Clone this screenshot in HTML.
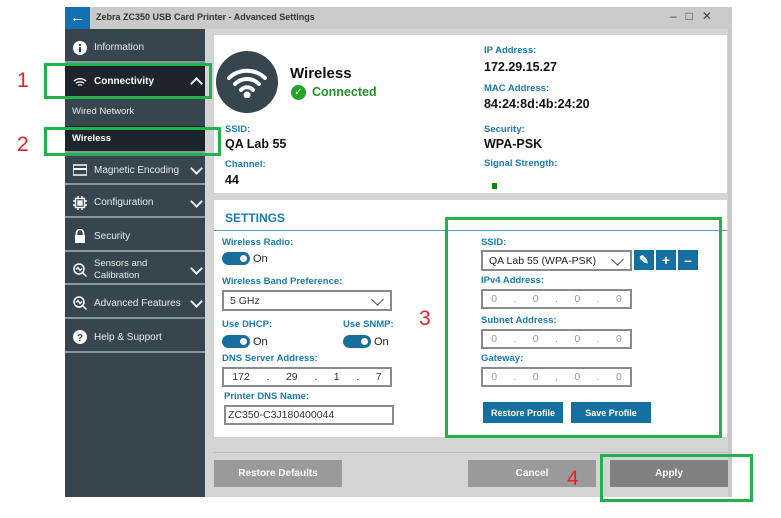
<!DOCTYPE html>
<html><head><style>
*{margin:0;padding:0;box-sizing:border-box}
body{width:781px;height:518px;background:#fff;position:relative;overflow:hidden;font-family:"Liberation Sans",sans-serif}
.a{position:absolute}
.lbl{color:#1a7bb0;font-weight:bold;font-size:9.5px}
.val{color:#111;font-weight:bold;font-size:12.5px}
.nav{position:absolute;left:65px;width:140px;color:#e8ecee;font-size:10px;border-bottom:2px solid #8a979e;display:flex;align-items:center;padding-left:29px;padding-top:4px}
.nav .ic{position:absolute;left:8px;width:14px;height:14px;margin-top:0}
.chev{position:absolute;right:4px;top:50%;margin-top:-4px;width:9px;height:9px;border-right:2px solid #e8ecee;border-bottom:2px solid #e8ecee;transform:rotate(45deg)}
.tog{display:inline-block;width:28px;height:13px;border-radius:7px;background:#1a6e9c;position:relative;vertical-align:middle}
.tog:after{content:"";position:absolute;right:3px;top:3px;width:7px;height:7px;border-radius:50%;background:#fff}
.on{font-size:11px;color:#222;vertical-align:middle;margin-left:3px}
.inp{position:absolute;border:2px solid #8a8a8a;background:#fff;font-size:10.5px;color:#333;display:flex;align-items:center}
.ip{justify-content:space-around;color:#999}
.bb{position:absolute;background:#1470a0;color:#fff;font-weight:bold;font-size:9px;display:flex;align-items:center;justify-content:center}
.gb{position:absolute;border:3px solid #22b14c}
.rn{position:absolute;color:#e8202a;font-size:21px}
</style></head><body>
<div class="a" style="left:65px;top:7px;width:667px;height:22px;background:#cacaca"></div>
<div class="a" style="left:65px;top:7px;width:25px;height:22px;background:#1470b0;color:#fff;font-size:15px;text-align:center;line-height:21px">&#8592;</div>
<div class="a" style="left:96px;top:12px;font-size:9px;font-weight:bold;color:#333">Zebra ZC350 USB Card Printer - Advanced Settings</div>
<div class="a" style="left:670px;top:9px;font-size:12px;color:#444;letter-spacing:9px">&#8211;&#9633;&#10005;</div>
<div class="a" style="left:65px;top:29px;width:140px;height:468px;background:#36454e"></div>
<div class="a" style="left:205px;top:29px;width:8px;height:468px;background:#d4d4d4"></div>
<div class="a" style="left:213px;top:29px;width:515px;height:468px;background:#d4d4d4"></div>
<div class="a" style="left:728px;top:29px;width:4px;height:468px;background:#c8c8c8"></div>
<div class="nav" style="top:30px;height:33px"><svg class="ic" viewBox="0 0 14 14"><circle cx="7" cy="7" r="7" fill="#fff"/><rect x="6" y="6" width="2" height="5" fill="#36454e"/><circle cx="7" cy="4" r="1.1" fill="#36454e"/></svg>Information</div>
<div class="nav" style="top:63px;height:35px;background:#1c252b;font-weight:bold;color:#fff"><svg class="ic" viewBox="0 0 14 14" fill="none" stroke="#fff" stroke-width="1.3"><path d="M1 6a9 9 0 0 1 12 0M3 8.3a6 6 0 0 1 8 0M5 10.5a3 3 0 0 1 4 0"/></svg>Connectivity<div class="chev" style="transform:rotate(225deg);margin-top:-1px"></div></div>
<div class="a" style="left:72px;top:106px;font-size:9.5px;color:#e8ecee">Wired Network</div>
<div class="a" style="left:65px;top:126px;width:140px;height:27px;background:#1c252b;border-bottom:2px solid #8a979e"></div>
<div class="a" style="left:72px;top:133px;font-size:9.5px;color:#fff;font-weight:bold">Wireless</div>
<div class="nav" style="top:153px;height:32px"><svg class="ic" viewBox="0 0 14 14"><rect x="0" y="2" width="14" height="10" fill="none" stroke="#fff" stroke-width="1.5"/><rect x="0" y="5" width="14" height="2" fill="#fff"/></svg>Magnetic Encoding<div class="chev"></div></div>
<div class="nav" style="top:185px;height:33px"><svg class="ic" viewBox="0 0 14 14" fill="none" stroke="#fff" stroke-width="1.4"><rect x="2.5" y="2.5" width="9" height="9"/><rect x="5" y="5" width="4" height="4" fill="#fff"/><path d="M5 0v2M9 0v2M5 12v2M9 12v2M0 5h2M0 9h2M12 5h2M12 9h2"/></svg>Configuration<div class="chev"></div></div>
<div class="nav" style="top:218px;height:34px"><svg class="ic" viewBox="0 0 14 14"><path d="M3.5 6V4a3.5 3.5 0 0 1 7 0v2" fill="none" stroke="#fff" stroke-width="1.6"/><rect x="2" y="6" width="10" height="8" fill="#fff"/></svg>Security</div>
<div class="nav" style="top:252px;height:33px;line-height:12px;font-size:9.5px">Sensors and<br>Calibration<svg class="ic" viewBox="0 0 14 14" fill="none" stroke="#fff" stroke-width="1.5"><circle cx="6" cy="6" r="5"/><path d="M9.5 9.5l4 4M3 6.5l2-2 2 3 2-2"/></svg><div class="chev"></div></div>
<div class="nav" style="top:285px;height:34px"><svg class="ic" viewBox="0 0 14 14" fill="none" stroke="#fff" stroke-width="1.5"><circle cx="6" cy="6" r="5"/><path d="M9.5 9.5l4 4M3 6.5l2-2 2 3 2-2"/></svg>Advanced Features<div class="chev"></div></div>
<div class="nav" style="top:319px;height:34px"><svg class="ic" viewBox="0 0 14 14"><circle cx="7" cy="7" r="7" fill="#fff"/><text x="7" y="11" font-size="10" font-weight="bold" text-anchor="middle" fill="#36454e" font-family="Liberation Sans">?</text></svg>Help &amp; Support</div>
<div class="a" style="left:214px;top:35px;width:513px;height:158px;background:#fff"></div>
<div class="a" style="left:216px;top:51px;width:62px;height:62px;border-radius:50%;background:#37454e"></div>
<svg class="a" style="left:226px;top:66px" width="42" height="32" viewBox="0 0 42 32" fill="none" stroke="#fff" stroke-width="4" stroke-linecap="round"><path d="M3 12a26 26 0 0 1 36 0M9 18a17 17 0 0 1 24 0M15 24a8 8 0 0 1 12 0"/><circle cx="21" cy="29" r="1.5" fill="#fff"/></svg>
<div class="a" style="left:290px;top:65px;font-size:15px;font-weight:bold;color:#111">Wireless</div>
<div class="a" style="left:291px;top:85px;width:15px;height:15px;border-radius:50%;background:#22a32a;color:#fff;font-size:10px;text-align:center;line-height:15px">&#10003;</div>
<div class="a" style="left:312px;top:85px;font-size:12.5px;font-weight:bold;color:#22902a">Connected</div>
<div class="a lbl" style="left:225px;top:124px">SSID:</div>
<div class="a val" style="left:225px;top:137px">QA Lab 55</div>
<div class="a lbl" style="left:225px;top:159px">Channel:</div>
<div class="a val" style="left:225px;top:173px">44</div>
<div class="a lbl" style="left:484px;top:45px">IP Address:</div>
<div class="a val" style="left:484px;top:60px">172.29.15.27</div>
<div class="a lbl" style="left:484px;top:83px">MAC Address:</div>
<div class="a val" style="left:484px;top:97px">84:24:8d:4b:24:20</div>
<div class="a lbl" style="left:484px;top:124px">Security:</div>
<div class="a val" style="left:484px;top:137px">WPA-PSK</div>
<div class="a lbl" style="left:484px;top:158px">Signal Strength:</div>
<div class="a" style="left:492px;top:183px;width:5px;height:6px;background:#0a8a0a"></div>
<div class="a" style="left:214px;top:200px;width:513px;height:237px;background:#fff"></div>
<div class="a" style="left:225px;top:211px;font-size:12px;font-weight:bold;color:#1a7bb0">SETTINGS</div>
<div class="a" style="left:214px;top:230px;width:513px;height:1px;background:#5d9cc4"></div>
<div class="a lbl" style="left:222px;top:237px">Wireless Radio:</div>
<div class="a" style="left:222px;top:250px"><span class="tog"></span><span class="on">On</span></div>
<div class="a lbl" style="left:222px;top:276px">Wireless Band Preference:</div>
<div class="inp" style="left:222px;top:290px;width:170px;height:21px;padding-left:6px">5 GHz<div class="chev" style="border-color:#555;border-width:1px;right:8px;width:9px;height:9px;margin-top:-6px"></div></div>
<div class="a lbl" style="left:222px;top:319px">Use DHCP:</div>
<div class="a" style="left:222px;top:333px"><span class="tog"></span><span class="on">On</span></div>
<div class="a lbl" style="left:343px;top:319px">Use SNMP:</div>
<div class="a" style="left:343px;top:333px"><span class="tog"></span><span class="on">On</span></div>
<div class="a lbl" style="left:222px;top:353px">DNS Server Address:</div>
<div class="inp ip" style="left:222px;top:367px;width:170px;height:20px;color:#333"><span>172</span><span>.</span><span>29</span><span>.</span><span>1</span><span>.</span><span>7</span></div>
<div class="a lbl" style="left:224px;top:391px">Printer DNS Name:</div>
<div class="inp" style="left:224px;top:405px;width:170px;height:20px;padding-left:2px">ZC350-C3J180400044</div>
<div class="a lbl" style="left:481px;top:237px">SSID:</div>
<div class="inp" style="left:481px;top:250px;width:151px;height:21px;padding-left:6px;color:#222">QA Lab 55 (WPA-PSK)<div class="chev" style="border-color:#555;border-width:1px;right:8px;width:9px;height:9px;margin-top:-6px"></div></div>
<div class="bb" style="left:634px;top:250px;width:20px;height:20px;font-size:12px">&#9998;</div>
<div class="bb" style="left:656px;top:250px;width:20px;height:20px;font-size:14px">+</div>
<div class="bb" style="left:678px;top:250px;width:20px;height:20px;font-size:14px">&#8211;</div>
<div class="a lbl" style="left:481px;top:275px">IPv4 Address:</div>
<div class="inp ip" style="left:481px;top:289px;width:151px;height:20px"><span>0</span><span>.</span><span>0</span><span>.</span><span>0</span><span>.</span><span>0</span></div>
<div class="a lbl" style="left:481px;top:315px">Subnet Address:</div>
<div class="inp ip" style="left:481px;top:329px;width:151px;height:20px"><span>0</span><span>.</span><span>0</span><span>.</span><span>0</span><span>.</span><span>0</span></div>
<div class="a lbl" style="left:481px;top:353px">Gateway:</div>
<div class="inp ip" style="left:481px;top:367px;width:151px;height:20px"><span>0</span><span>.</span><span>0</span><span>.</span><span>0</span><span>.</span><span>0</span></div>
<div class="bb" style="left:483px;top:402px;width:80px;height:21px">Restore Profile</div>
<div class="bb" style="left:571px;top:402px;width:80px;height:21px">Save Profile</div>
<div class="a" style="left:214px;top:452px;width:514px;height:1px;background:#bbb"></div>
<div class="a" style="left:214px;top:460px;width:128px;height:27px;background:#9a9a9a;color:#fff;font-weight:bold;font-size:10px;display:flex;align-items:center;justify-content:center">Restore Defaults</div>
<div class="a" style="left:468px;top:460px;width:128px;height:27px;background:#9a9a9a;color:#fff;font-weight:bold;font-size:10px;display:flex;align-items:center;justify-content:center">Cancel</div>
<div class="a" style="left:610px;top:460px;width:118px;height:27px;background:#808080;color:#fff;font-weight:bold;font-size:10px;display:flex;align-items:center;justify-content:center">Apply</div>
<div class="gb" style="left:44px;top:63px;width:168px;height:36px"></div>
<div class="gb" style="left:44px;top:127px;width:177px;height:29px"></div>
<div class="gb" style="left:445px;top:217px;width:277px;height:221px"></div>
<div class="gb" style="left:600px;top:454px;width:153px;height:48px"></div>
<div class="rn" style="left:17px;top:69px">1</div>
<div class="rn" style="left:17px;top:133px">2</div>
<div class="rn" style="left:419px;top:307px">3</div>
<div class="rn" style="left:567px;top:467px">4</div>
</body></html>
